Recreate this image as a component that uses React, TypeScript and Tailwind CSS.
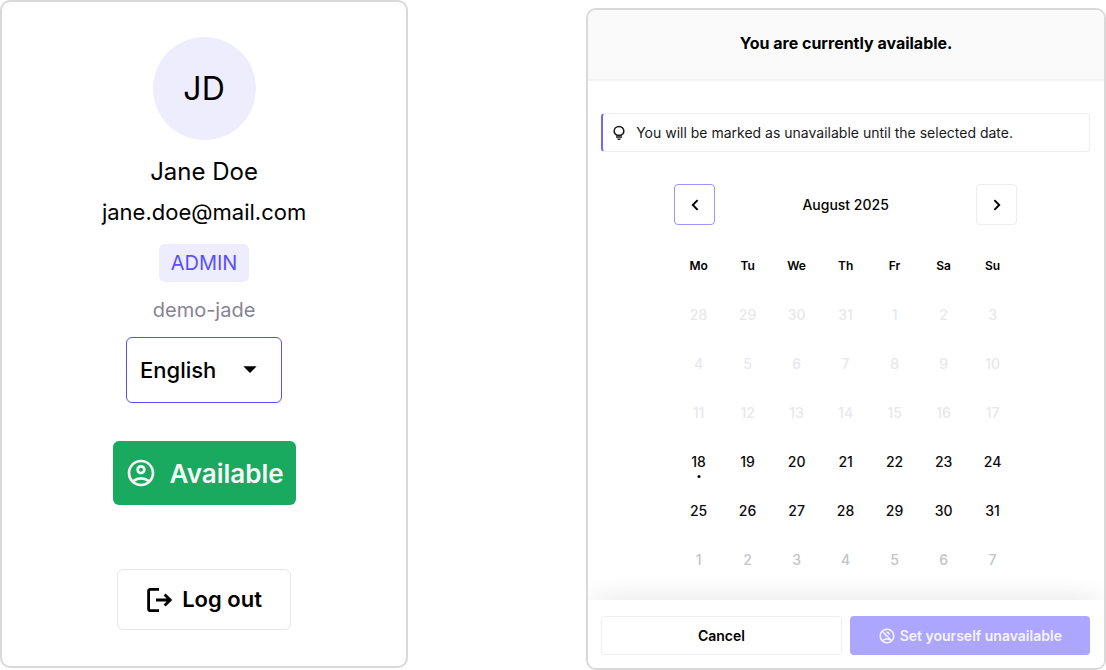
import { useState } from 'react'
import { MdArrowDropDown, MdOutlineAccountCircle, MdOutlineNoAccounts } from 'react-icons/md'
import clsx from 'clsx'

type DayState = 'past' | 'open' | 'next'

const WEEKDAYS = ['Mo', 'Tu', 'We', 'Th', 'Fr', 'Sa', 'Su']

const WEEKS: { days: number[]; state: DayState }[] = [
  { days: [28, 29, 30, 31, 1, 2, 3], state: 'past' },
  { days: [4, 5, 6, 7, 8, 9, 10], state: 'past' },
  { days: [11, 12, 13, 14, 15, 16, 17], state: 'past' },
  { days: [18, 19, 20, 21, 22, 23, 24], state: 'open' },
  { days: [25, 26, 27, 28, 29, 30, 31], state: 'open' },
  { days: [1, 2, 3, 4, 5, 6, 7], state: 'next' }
]

const DAY_COLORS: Record<DayState, string> = {
  past: 'text-[#e8e8ea]',
  open: 'text-[#0b0b0d]',
  next: 'text-[#c3c3c8]'
}

const TODAY = 18

function LogoutIcon() {
  return (
    <svg width="26" height="26" viewBox="0 0 26 26" fill="none" stroke="currentColor" strokeWidth="2.8" aria-hidden="true">
      <path d="M13 2.3H4.6Q2.6 2.3 2.6 4.3V21.7Q2.6 23.7 4.6 23.7H13" />
      <path d="M10 13H24.5M18.6 7.4L24.2 13L18.6 18.6" />
    </svg>
  )
}

function BulbIcon() {
  return (
    <svg width="16" height="16" viewBox="0 0 16 16" fill="none" stroke="currentColor" strokeWidth="1.5" aria-hidden="true">
      <path d="M6 10.2C4.2 9.4 3.2 8 3.2 6.2A4.8 4.8 0 0 1 12.8 6.2C12.8 8 11.8 9.4 10 10.2Z" />
      <path d="M5 12.1H11" />
      <path d="M6.2 13.4H9.8A1.8 1.6 0 0 1 6.2 13.4Z" fill="currentColor" stroke="none" />
    </svg>
  )
}

function ChevronIcon({ direction }: { direction: 'left' | 'right' }) {
  return (
    <svg width="16" height="16" viewBox="0 0 16 16" fill="none" stroke="currentColor" strokeWidth="1.9" aria-hidden="true">
      <path d={direction === 'left' ? 'M10.6 3.2L5.8 8L10.6 12.8' : 'M5.4 3.2L10.2 8L5.4 12.8'} />
    </svg>
  )
}

function ProfileCard() {
  const [language, setLanguage] = useState('en')

  return (
    <section className="flex w-[36.9%] flex-col items-center self-start rounded-[10px] border-2 border-[#d9d9d9] bg-white pt-[35px] pb-9">
      <div className="flex size-[103px] items-center justify-center rounded-full bg-[#eeedfd] text-[32px]">JD</div>
      <h1 className="mt-4 text-2xl leading-8">Jane Doe</h1>
      <p className="mt-2 text-[22px] leading-8">jane.doe@mail.com</p>
      <span className="mt-4 rounded-md bg-[#eeedfd] px-3 py-[5px] text-xl leading-7 text-[#5a50fa]">ADMIN</span>
      <p className="mt-[14px] text-xl leading-7 text-[#868394]">demo-jade</p>

      <div className="relative mt-[13px]">
        <select
          aria-label="Language"
          value={language}
          onChange={(e) => setLanguage(e.target.value)}
          className="h-[66px] w-[156px] appearance-none rounded-md border border-[#5a50fa] bg-white px-[13px] text-[22px] font-medium"
        >
          <option value="en">English</option>
          <option value="fr">Français</option>
        </select>
        <MdArrowDropDown size={32} className="pointer-events-none absolute top-4 right-4" />
      </div>

      <button className="mt-[38px] flex h-16 items-center gap-[13px] rounded-md bg-[#1aaa5f] px-3 text-[26px] font-semibold text-[#f7f7f8]">
        <MdOutlineAccountCircle size={32} />
        Available
      </button>

      <button className="mt-16 flex h-[61px] items-center gap-[10px] rounded-md border border-[#e5e5e7] px-7 text-[22px] font-semibold">
        <LogoutIcon />
        Log out
      </button>
    </section>
  )
}

function Calendar() {
  return (
    <div className="mx-auto w-[343px]">
      <div className="flex items-center justify-between">
        <button aria-label="Previous month" className="flex size-[41px] items-center justify-center rounded-sm border border-[#9d94fd]">
          <ChevronIcon direction="left" />
        </button>
        <h3 className="text-sm font-medium">August 2025</h3>
        <button aria-label="Next month" className="flex size-[41px] items-center justify-center rounded-sm border border-[#ededee]">
          <ChevronIcon direction="right" />
        </button>
      </div>

      <table className="mt-4 w-full table-fixed text-center">
        <thead>
          <tr className="h-[49px]">
            {WEEKDAYS.map((day) => (
              <th key={day} className="p-0 text-xs font-semibold">{day}</th>
            ))}
          </tr>
        </thead>
        <tbody>
          {WEEKS.map((week, i) => (
            <tr key={i} className="h-[49px]">
              {week.days.map((day) => (
                <td key={day} className="p-0">
                  <button
                    disabled={week.state === 'past'}
                    className={clsx('relative h-10 w-full text-sm font-medium', DAY_COLORS[week.state])}
                  >
                    {day}
                    {week.state === 'open' && day === TODAY && (
                      <span className="absolute bottom-1 left-1/2 size-[3px] -translate-x-1/2 rounded-full bg-black" />
                    )}
                  </button>
                </td>
              ))}
            </tr>
          ))}
        </tbody>
      </table>
    </div>
  )
}

function AvailabilityDialog() {
  return (
    <section className="mt-2 flex w-[47%] flex-col self-start overflow-hidden rounded-[10px] border-2 border-[#d9d9d9] bg-white">
      <header className="border-b-2 border-[#f4f4f5] bg-[#fafafa] pt-[21px] pb-6 text-center">
        <h2 className="text-base leading-6 font-bold">You are currently available.</h2>
      </header>

      <div className="pt-8 pr-[14px] pb-4 pl-[13px]">
        <div className="mb-8 flex h-[39px] items-center gap-[9px] rounded-sm border border-l-2 border-[#efeff0] border-l-[#7166fb] pl-2 text-sm text-[#18181b]">
          <BulbIcon />
          <p>You will be marked as unavailable until the selected date.</p>
        </div>
        <Calendar />
      </div>

      <footer className="grid grid-cols-2 gap-2 bg-white pt-4 pr-[14px] pb-[13px] pl-[13px] text-sm font-semibold shadow-[0_-8px_28px_-8px_rgba(24,24,48,0.12)]">
        <button className="h-[39px] rounded-sm border border-[#efeff0]">Cancel</button>
        <button className="flex h-[39px] items-center justify-center gap-1 rounded-sm bg-[#ada6fe] text-[#f5f4ff]">
          <MdOutlineNoAccounts size={18} />
          Set yourself unavailable
        </button>
      </footer>
    </section>
  )
}

export default function App() {
  return (
    <main className="flex min-h-screen justify-between bg-white font-['Inter',sans-serif] text-black">
      <ProfileCard />
      <AvailabilityDialog />
    </main>
  )
}
